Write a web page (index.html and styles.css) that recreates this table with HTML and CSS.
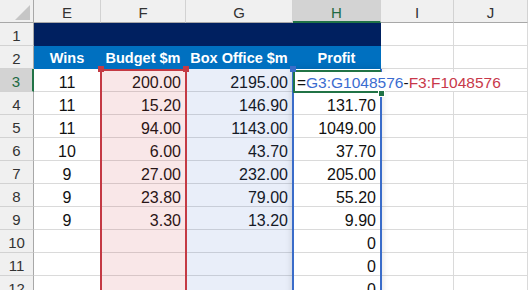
FILE: index.html
```html
<!DOCTYPE html>
<html>
<head>
    <title>Profit formula</title>
    <meta name="viewport" content="width=device-width, initial-scale=1">
    <link rel="stylesheet" href="styles.css">
</head>
<body>
    <div class="sheet">
        <!-- column headers -->
        <div class="cell corner">
            <svg width="33" height="23" viewBox="0 0 33 23"><polygon points="30,5 30,20 15,20" fill="#c6c6c6"/></svg>
        </div>
        <div class="cell col">E</div>
        <div class="cell col">F</div>
        <div class="cell col">G</div>
        <div class="cell col selected">H</div>
        <div class="cell col">I</div>
        <div class="cell col">J</div>

        <div class="cell row">1</div>
        <div class="cell title"></div>
        <div class="cell title"></div>
        <div class="cell title"></div>
        <div class="cell title"></div>
        <div class="cell"></div>
        <div class="cell"></div>

        <div class="cell row">2</div>
        <div class="cell head">Wins</div>
        <div class="cell head">Budget $m</div>
        <div class="cell head">Box Office $m</div>
        <div class="cell head">Profit</div>
        <div class="cell"></div>
        <div class="cell"></div>

        <div class="cell row selected">3</div>
        <div class="cell mid">11</div>
        <div class="cell num">200.00</div>
        <div class="cell num">2195.00</div>
        <div class="cell num"></div>
        <div class="cell"></div>
        <div class="cell"></div>

        <div class="cell row">4</div>
        <div class="cell mid">11</div>
        <div class="cell num">15.20</div>
        <div class="cell num">146.90</div>
        <div class="cell num">131.70</div>
        <div class="cell"></div>
        <div class="cell"></div>

        <div class="cell row">5</div>
        <div class="cell mid">11</div>
        <div class="cell num">94.00</div>
        <div class="cell num">1143.00</div>
        <div class="cell num">1049.00</div>
        <div class="cell"></div>
        <div class="cell"></div>

        <div class="cell row">6</div>
        <div class="cell mid">10</div>
        <div class="cell num">6.00</div>
        <div class="cell num">43.70</div>
        <div class="cell num">37.70</div>
        <div class="cell"></div>
        <div class="cell"></div>

        <div class="cell row">7</div>
        <div class="cell mid">9</div>
        <div class="cell num">27.00</div>
        <div class="cell num">232.00</div>
        <div class="cell num">205.00</div>
        <div class="cell"></div>
        <div class="cell"></div>

        <div class="cell row">8</div>
        <div class="cell mid">9</div>
        <div class="cell num">23.80</div>
        <div class="cell num">79.00</div>
        <div class="cell num">55.20</div>
        <div class="cell"></div>
        <div class="cell"></div>

        <div class="cell row">9</div>
        <div class="cell mid">9</div>
        <div class="cell num">3.30</div>
        <div class="cell num">13.20</div>
        <div class="cell num">9.90</div>
        <div class="cell"></div>
        <div class="cell"></div>

        <div class="cell row">10</div>
        <div class="cell"></div>
        <div class="cell"></div>
        <div class="cell"></div>
        <div class="cell num">0</div>
        <div class="cell"></div>
        <div class="cell"></div>

        <div class="cell row">11</div>
        <div class="cell"></div>
        <div class="cell"></div>
        <div class="cell"></div>
        <div class="cell num">0</div>
        <div class="cell"></div>
        <div class="cell"></div>

        <div class="cell row">12</div>
        <div class="cell"></div>
        <div class="cell"></div>
        <div class="cell"></div>
        <div class="cell num">0</div>
        <div class="cell"></div>
        <div class="cell"></div>

        <!-- reference highlights drawn over the grid while editing H3 -->
        <div class="range range-g"></div>
        <div class="range range-f"></div>
        <div class="range spill"></div>
        <div class="editor">
            <span class="formula">=<span class="ref-g">G3:G1048576</span>-<span class="ref-f">F3:F1048576</span></span>
        </div>
        <div class="handle handle-f1"></div>
        <div class="handle handle-f2"></div>
        <div class="handle handle-g"></div>
        <div class="handle handle-edit"></div>
    </div>
</body>
</html>
```

FILE: styles.css
```css
body { margin: 0; overflow: hidden; background-color: white; font-family: "Liberation Sans", Arial, sans-serif; color: #111; }
.sheet { position: relative; display: grid; grid-template-columns: 34px 67px 85px 107px 88px 73px 1fr; grid-auto-rows: 23px; height: 299px; }
.cell { box-sizing: border-box; border-right: 1px solid #dadada; border-bottom: 1px solid #dadada; font-size: 16px; line-height: 27px; white-space: nowrap; overflow: hidden; }
.corner { background-color: #f0f0f0; border-right-color: #a8a8a8; border-bottom-color: #a8a8a8; }
.corner svg { display: block; }
.col { background-color: #f0f0f0; border-right-color: #d2d2d2; border-bottom-color: #a8a8a8; text-align: center; font-size: 15px; line-height: 26px; color: #333; }
.row { background-color: #f0f0f0; border-right-color: #a8a8a8; border-bottom-color: #d2d2d2; text-align: center; font-size: 15px; line-height: 26px; color: #333; }
.col.selected { background-color: #d3d3d3; border-bottom: 2px solid #217346; color: #1d6a42; }
.row.selected { background-color: #d3d3d3; border-right: 2px solid #217346; color: #1d6a42; }
.title { background-color: #002060; border-color: #002060; }
.head { background-color: #0070c0; border-color: #0070c0; color: white; font-weight: bold; font-size: 14.5px; line-height: 25px; text-align: center; }
.num { text-align: right; padding-right: 4px; }
.mid { text-align: center; }

.range { position: absolute; top: 69px; bottom: 0; box-sizing: border-box; }
.range-g { left: 186px; width: 107px; background-color: rgba(52, 103, 200, 0.11); }
.range-f { left: 100px; width: 87px; border: 2px solid #c43a44; border-bottom: none; background-color: rgba(205, 55, 65, 0.12); }
.spill { left: 292px; width: 90px; border-left: 2px solid #3a6cc9; border-right: 2px solid #3a6cc9; box-shadow: 0 0 7px rgba(0, 0, 0, 0.14); }

.editor { position: absolute; left: 293px; top: 70px; width: 88px; height: 23px; box-sizing: border-box; border: 2px solid #217346; border-right: none; background-color: white; }
.formula { display: inline-block; height: 19px; padding: 0 10px 0 2px; background-color: white; font-size: 15.5px; line-height: 21px; white-space: nowrap; color: #111; }
.ref-g { color: #3a6cd0; }
.ref-f { color: #c8384a; }

.handle { position: absolute; width: 6px; height: 6px; box-sizing: border-box; }
.handle-f1 { left: 98px; top: 66px; background-color: #c43a44; }
.handle-f2 { left: 183px; top: 66px; background-color: #c43a44; }
.handle-g { left: 290px; top: 66px; background-color: #3a6cc9; }
.handle-edit { left: 378px; top: 90px; background-color: #217346; border: 1px solid white; width: 7px; height: 7px; }
```
